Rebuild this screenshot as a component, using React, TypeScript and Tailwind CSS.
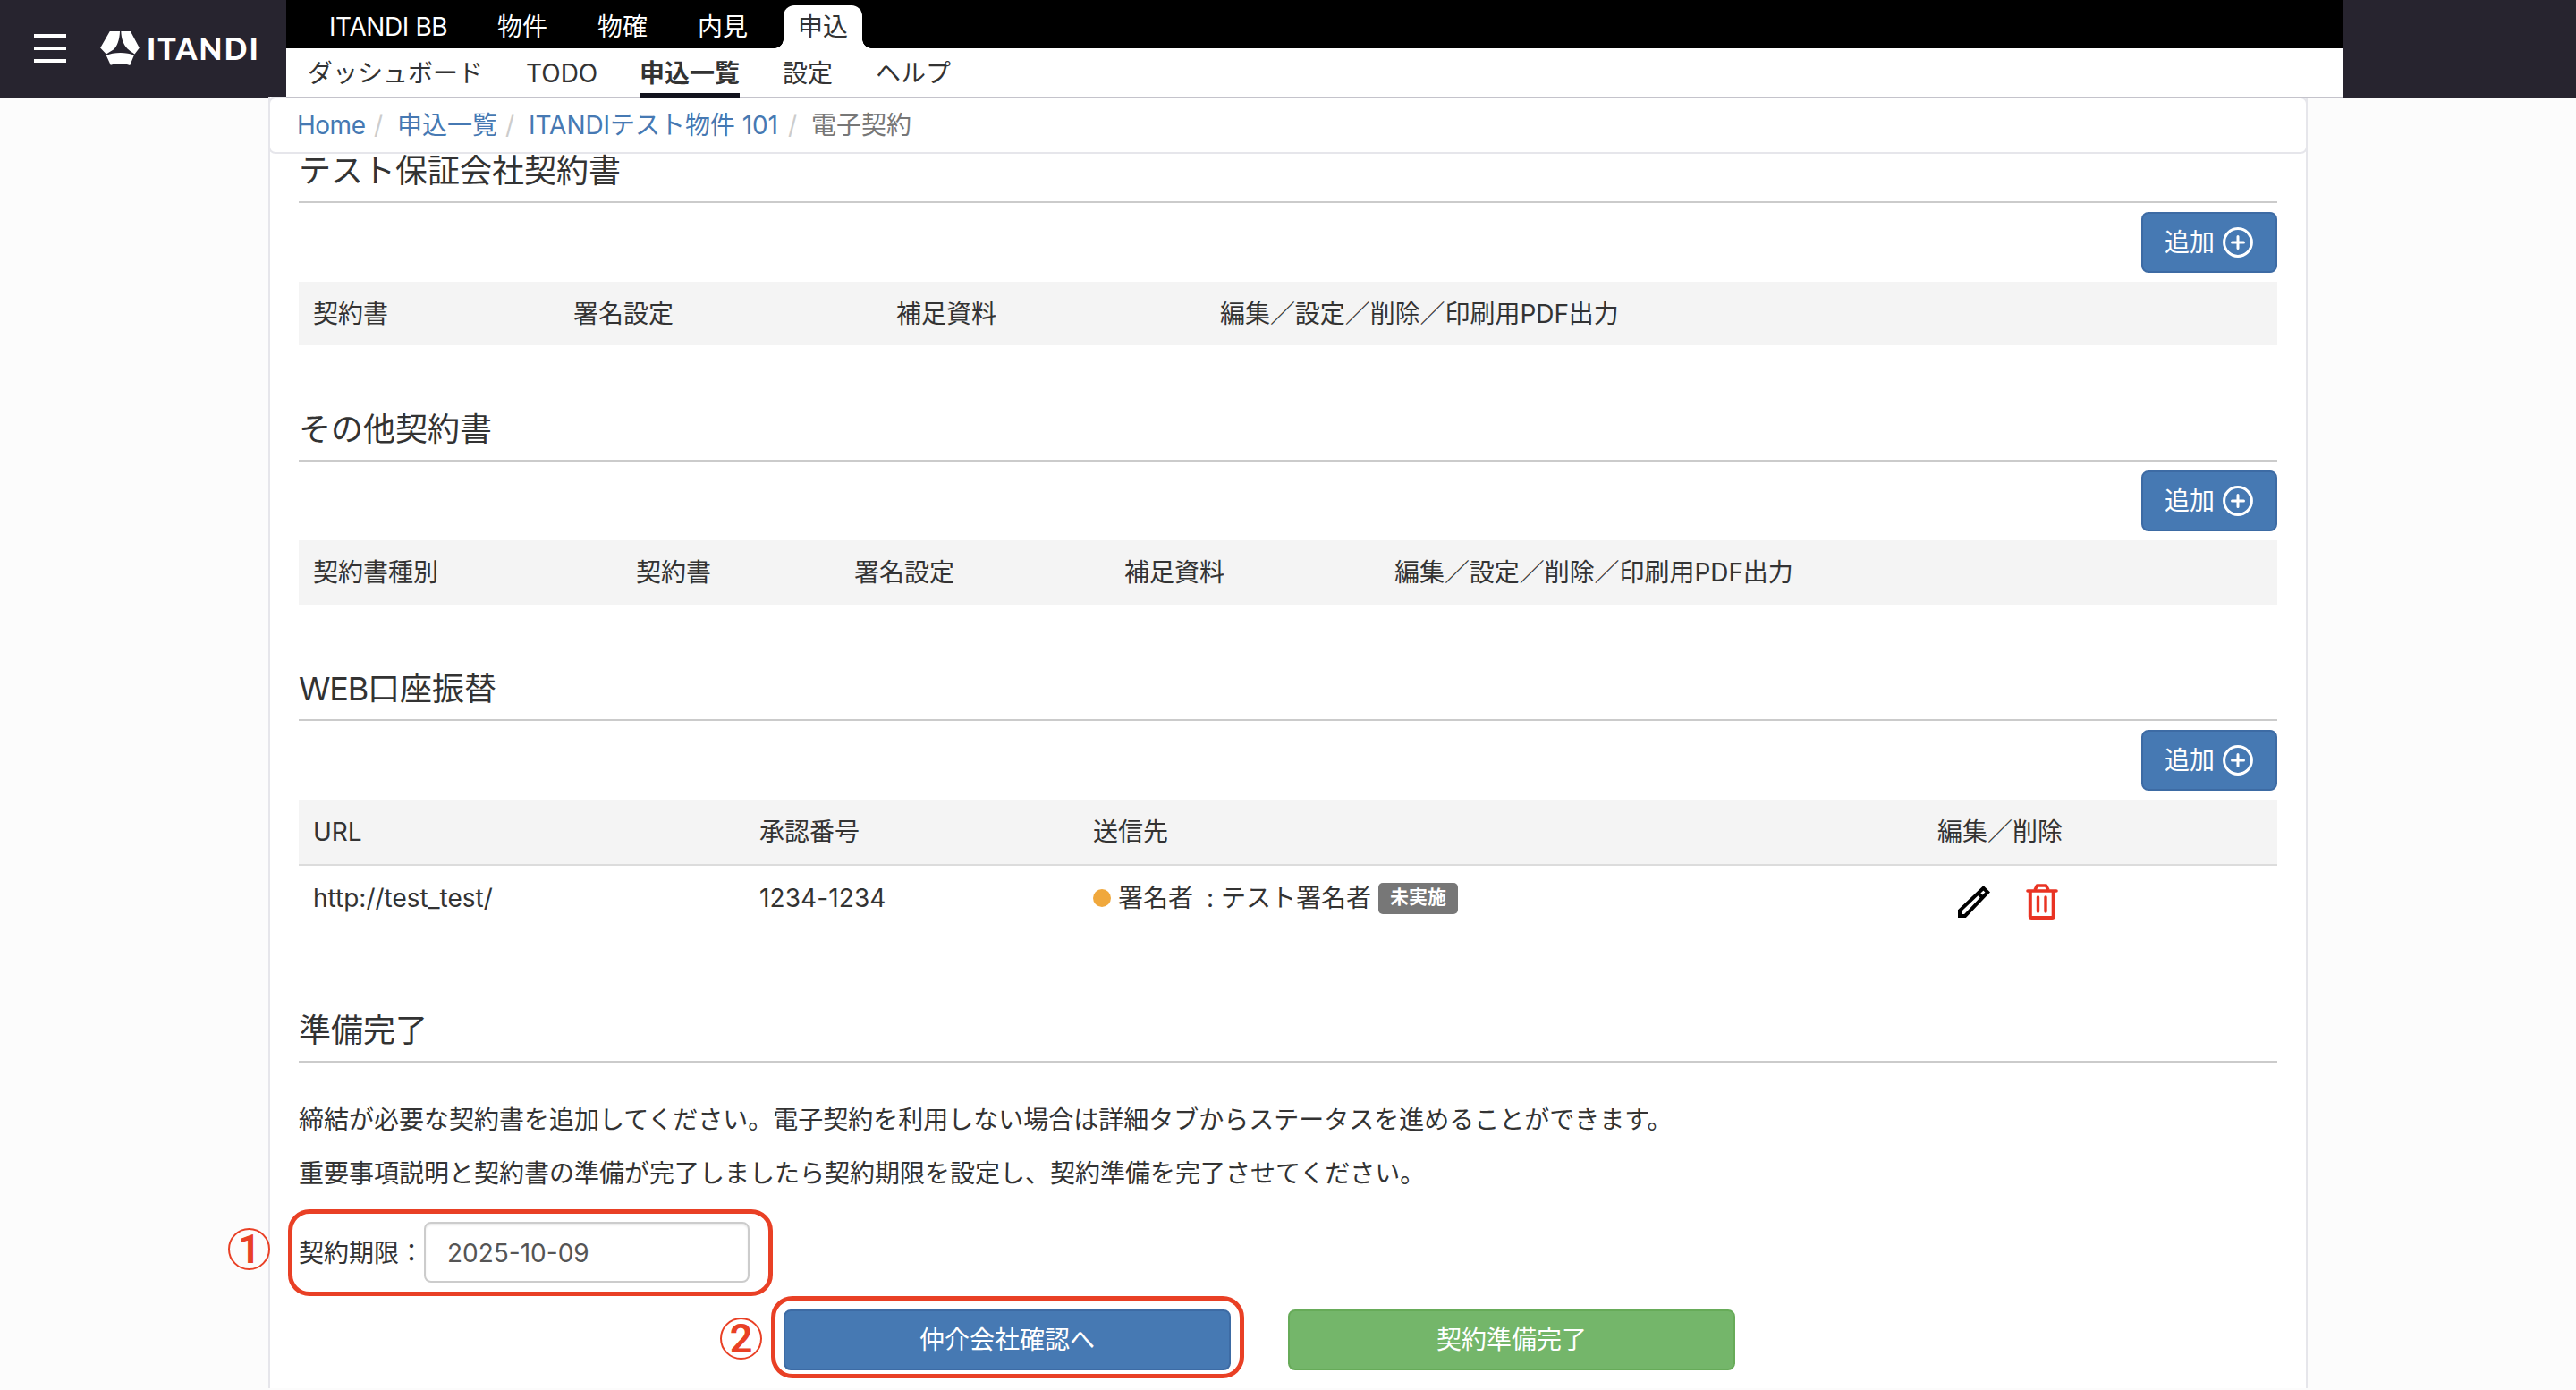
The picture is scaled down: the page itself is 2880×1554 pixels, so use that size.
import type { ReactNode } from 'react';
import clsx from 'clsx';

const mainNav = ['ITANDI BB', '物件', '物確', '内見'];

const subNav = [
  { label: 'ダッシュボード', width: 'w-[196px]' },
  { label: 'TODO', width: 'w-[79px]' },
  { label: '申込一覧', width: 'w-[112px]', active: true },
  { label: '設定', width: 'w-[56px]' },
  { label: 'ヘルプ', width: 'w-[84px]' },
];

const breadcrumbs = [
  { label: 'Home', width: 'w-[77px] tracking-[-0.5px]' },
  { label: '申込一覧', width: 'w-[112px]' },
  { label: 'ITANDIテスト物件 101', width: 'w-[281px] tracking-[-0.05px]' },
];

function Logo() {
  return (
    <div className="flex items-center">
      <svg width="44" height="38" viewBox="0 0 132 115" fill="#fff">
        <path d="M32 0H66C65 28 57 52 44 62C34 69 26 73 20 77L0 56Z" />
        <path d="M70 0H102L132 56L116 77C108 71 99 66 91 58C77 44 71 23 70 0Z" />
        <path d="M20 82C43 70 90 70 114 81L100 115C82 107 56 107 35 114Z" />
      </svg>
      <span className="ml-2 font-['Lato'] text-[34px] leading-[38px] font-black tracking-[2px] text-white">
        ITANDI
      </span>
    </div>
  );
}

function Header() {
  return (
    <header className="flex h-[110px] bg-[#27242f]">
      <div className="flex w-[320px] items-center pb-0.5 pl-[38px]">
        <button type="button" className="mr-[38px] flex w-9 flex-col gap-2.5">
          <span className="h-1 bg-white" />
          <span className="h-1 bg-white" />
          <span className="h-1 bg-white" />
        </button>
        <Logo />
      </div>

      <div className="w-[2300px] border-b-2 border-[#c4c3cb] bg-white">
        <nav className="flex h-[54px] bg-black pl-12 leading-[48px] text-white">
          {mainNav.map((item) => (
            <a
              key={item}
              className={clsx('mr-[56px] pt-1.5 whitespace-nowrap', item === 'ITANDI BB' && 'w-[132px] tracking-[-0.4px]')}
            >
              {item}
            </a>
          ))}
          <div className="-ml-[26px] flex items-end pt-1.5">
            <span className="h-2.5 w-2.5 bg-[radial-gradient(circle_at_0_0,#000_9.5px,#fff_10px)]" />
            <a className="h-12 w-[88px] rounded-t-xl bg-white px-4 text-[#333]">申込</a>
            <span className="h-2.5 w-2.5 bg-[radial-gradient(circle_at_100%_0,#000_9.5px,#fff_10px)]" />
          </div>
        </nav>
        <nav className="flex h-14 gap-12 pl-6 leading-[56px]">
          {subNav.map((item) => (
            <a
              key={item.label}
              className={clsx(
                'whitespace-nowrap',
                item.width,
                item.active && 'border-b-6 border-[#12131d] font-bold'
              )}
            >
              {item.label}
            </a>
          ))}
        </nav>
      </div>
    </header>
  );
}

function Breadcrumb() {
  return (
    <div className="-mx-0.5 -mt-0.5 flex h-16 rounded-lg border-2 border-[#e6e6eb] bg-white pl-[30px] leading-[60px]">
      {breadcrumbs.map((item) => (
        <div key={item.label} className="flex">
          <a className={clsx('whitespace-nowrap text-[#4679b3]', item.width)}>{item.label}</a>
          <span className="w-[35px] pl-[9px] text-[#ccc]">/</span>
        </div>
      ))}
      <span className="text-[#777]">電子契約</span>
    </div>
  );
}

function Heading({ children }: { children: ReactNode }) {
  return (
    <h3 className="border-b-2 border-[#cbcbcb] pb-[15px] text-[36px] leading-[38px]">{children}</h3>
  );
}

function AddButton() {
  return (
    <div className="flex justify-end py-2.5">
      <button
        type="button"
        className="flex h-[68px] w-[152px] items-center rounded-lg border-2 border-[#3d6ba4] bg-[#4679b3] pl-6 text-white"
      >
        追加
        <svg className="ml-[9px]" width="34" height="34" viewBox="0 0 34 34" fill="none" stroke="#fff" strokeWidth="3">
          <circle cx="17" cy="17" r="15.4" />
          <path d="M10.5 17h13M17 10.5v13" strokeLinecap="round" />
        </svg>
      </button>
    </div>
  );
}

function PencilIcon() {
  return (
    <svg width="36" height="36" viewBox="0 0 36 36" fill="none" stroke="#000" strokeWidth="4">
      <path d="M2 34V28L28.5 2.8L33.2 7.5L8 34Z" />
      <path d="M22.5 8.5L27.5 13.5" />
    </svg>
  );
}

function TrashIcon() {
  return (
    <svg width="36" height="40" viewBox="0 0 36 40" fill="none" stroke="#e93323" strokeWidth="4">
      <path d="M2 8H34" strokeLinecap="round" strokeWidth="3.6" />
      <path d="M10 7L12.5 2H22.5L25 7" strokeLinejoin="round" strokeWidth="3.6" />
      <path d="M4.8 8V36.5Q4.8 38 6.3 38H29.2Q30.7 38 30.7 36.5V8" />
      <path d="M13.5 15V31M22 15V31" strokeLinecap="round" strokeWidth="3.4" />
    </svg>
  );
}

function Marker({ children, className }: { children: ReactNode; className: string }) {
  return (
    <span
      className={clsx(
        "absolute flex h-[47px] w-[47px] items-center justify-center rounded-full border-2 border-[#e94025] font-['Roboto'] text-[45px] leading-none font-semibold text-[#e94025]",
        className
      )}
    >
      {children}
    </span>
  );
}

export default function App() {
  return (
    <div className="h-[1554px] w-[2880px] overflow-hidden bg-[#fcfcfc] font-['Inter','Noto_Sans_CJK_JP',sans-serif] text-[28px] text-[#333]">
      <Header />

      <main className="mx-auto h-[1444px] w-[2280px] border-x-2 border-[#e6e6eb] bg-white">
        <Breadcrumb />

        <div className="px-8">
          <section>
            <Heading>テスト保証会社契約書</Heading>
            <AddButton />
            <div className="flex h-[71px] bg-[#f4f4f4] pl-4 leading-[72px]">
              <div className="w-[291px]">契約書</div>
              <div className="w-[361px]">署名設定</div>
              <div className="w-[362px]">補足資料</div>
              <div className="tracking-[-0.05px]">編集／設定／削除／印刷用PDF出力</div>
            </div>
          </section>

          <section className="mt-[75px]">
            <Heading>その他契約書</Heading>
            <AddButton />
            <div className="flex h-[72px] bg-[#f4f4f4] pl-4 leading-[72px]">
              <div className="w-[361px]">契約書種別</div>
              <div className="w-[244px]">契約書</div>
              <div className="w-[302px]">署名設定</div>
              <div className="w-[302px]">補足資料</div>
              <div className="tracking-[-0.05px]">編集／設定／削除／印刷用PDF出力</div>
            </div>
          </section>

          <section className="mt-[75px]">
            <Heading>
              <span className="tracking-[-1.2px]">WEB</span>口座振替
            </Heading>
            <AddButton />
            <div className="flex h-[74px] border-b-2 border-[#dcdcdc] bg-[#f4f4f4] pl-4 leading-[72px]">
              <div className="w-[499px]">URL</div>
              <div className="w-[373px]">承認番号</div>
              <div className="w-[944px]">送信先</div>
              <div>編集／削除</div>
            </div>
            <div className="flex h-[80px] pl-4 leading-[72px]">
              <div className="w-[499px]">http://test_test/</div>
              <div className="w-[373px] tracking-[0.1px]">1234-1234</div>
              <div className="flex w-[944px] items-center self-start">
                <span className="mr-2 h-5 w-5 rounded-full bg-[#f0a83c]" />
                <span className="flex w-[115px] gap-[15px]">
                  署名者<span>:</span>
                </span>
                <span>テスト署名者</span>
                <span className="ml-2 h-[35px] w-[89px] rounded-[5px] bg-[#777] text-center text-[21px] leading-[32px] font-bold text-white">
                  未実施
                </span>
              </div>
              <div className="flex items-start gap-10 pt-5 pl-[23px]">
                <span className="pt-0.5"><PencilIcon /></span>
                <TrashIcon />
              </div>
            </div>
          </section>

          <section className="mt-[85px]">
            <Heading>準備完了</Heading>
            <p className="mt-11 leading-10">
              締結が必要な契約書を追加してください。電子契約を利用しない場合は詳細タブからステータスを進めることができます。
            </p>
            <p className="mt-5 leading-10">
              重要事項説明と契約書の準備が完了しましたら契約期限を設定し、契約準備を完了させてください。
            </p>

            <div className="relative mt-[34px] flex h-[68px] items-center">
              <label className="pt-0.5">契約期限：</label>
              <input
                type="text"
                defaultValue="2025-10-09"
                className="h-[68px] w-[364px] rounded-lg border-2 border-[#ccc] px-6 pt-0.5 text-[#555] shadow-[inset_0_2px_2px_rgba(0,0,0,0.075)]"
              />
              <span className="absolute -top-[14px] -left-3 h-[97px] w-[542px] rounded-3xl border-[5.5px] border-[#e94025]" />
              <Marker className="top-[7px] -left-[79px]">1</Marker>
            </div>

            <div className="relative mt-[30px] flex gap-16 pl-[542px]">
              <button type="button" className="h-[68px] w-[500px] rounded-lg border-2 border-[#3d6ba4] bg-[#4679b3] text-white">
                仲介会社確認へ
              </button>
              <button type="button" className="h-[68px] w-[500px] rounded-lg border-2 border-[#67ab59] bg-[#74b66a] text-white">
                契約準備完了
              </button>
              <span className="absolute -top-[15px] left-[528px] h-[92px] w-[529px] rounded-3xl border-[5.5px] border-[#e94025]" />
              <Marker className="top-[9px] left-[471px]">2</Marker>
            </div>
          </section>
        </div>
      </main>
    </div>
  );
}
